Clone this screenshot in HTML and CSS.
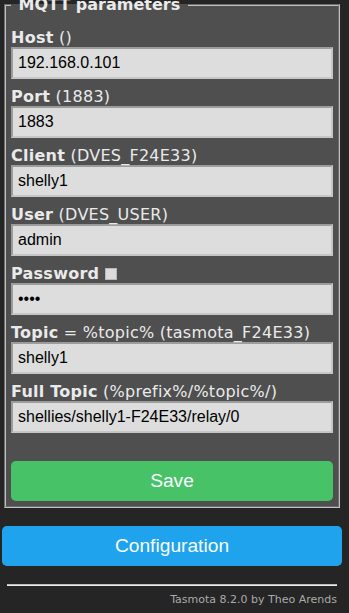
FILE: index.html
```html
<!DOCTYPE html>
<html lang="en">
<head>
  <meta charset="UTF-8">
  <title>Configure MQTT</title>
  <link rel="stylesheet" href="styles.css">
</head>
<body>
  <div class="main">
    <fieldset class="params">
      <legend>&nbsp;MQTT parameters&nbsp;</legend>

      <form id="mqttForm" class="mqtt-form">
        <p class="field">
          <label for="mh"><b>Host</b> ()</label>
          <input type="text" id="mh" value="192.168.0.101">
        </p>
        <p class="field">
          <label for="ml"><b>Port</b> (1883)</label>
          <input type="text" id="ml" value="1883">
        </p>
        <p class="field">
          <label for="mc"><b>Client</b> (DVES_F24E33)</label>
          <input type="text" id="mc" value="shelly1">
        </p>
        <p class="field">
          <label for="mu"><b>User</b> (DVES_USER)</label>
          <input type="text" id="mu" value="admin">
        </p>
        <p class="field">
          <label for="mp"><b>Password</b><input type="checkbox" id="show" class="show-pw"></label>
          <input type="password" id="mp" value="1234">
        </p>
        <p class="field">
          <label for="mt"><b>Topic</b> = %topic% (tasmota_F24E33)</label>
          <input type="text" id="mt" value="shelly1">
        </p>
        <p class="field">
          <label for="mf"><b>Full Topic</b> (%prefix%/%topic%/)</label>
          <input type="text" id="mf" value="shellies/shelly1-F24E33/relay/0">
        </p>

        <button type="submit" class="btn btn-save">Save</button>
      </form>
    </fieldset>

    <button type="button" class="btn btn-config">Configuration</button>

    <div class="footer">
      <hr>
      <span class="credit">Tasmota 8.2.0 by Theo Arends</span>
    </div>
  </div>
</body>
</html>
```

FILE: styles.css
```css
body {
  background: #252525;
  font-family: "DejaVu Sans", Verdana, sans-serif;
  font-size: 16px;
  margin: 0;
  overflow: hidden;
}

.main {
  width: 340px;
  margin: -4px 0 0 2px;
  color: #eaeaea;
}

.params {
  background: #4f4f4f;
  margin: 0 2px;
  padding: 6px 5px 5px;
  border: 2px groove #c0c0c0;
  min-width: 0;
}

.params legend {
  font-weight: bold;
  line-height: 18px;
  padding: 0 2px;
}

.field {
  margin: 8px 0;
}

.field label {
  display: block;
  line-height: 19px;
  letter-spacing: 0.25px;
}

.field input[type=text],
.field input[type=password] {
  display: block;
  width: 100%;
  height: 32px;
  box-sizing: border-box;
  padding: 5px;
  border: 2px solid;
  border-color: #9c9c9c #c6c6c6 #c6c6c6 #9c9c9c;
  background: #dddddd;
  color: #000;
  font-family: "Liberation Sans", Arial, sans-serif;
  font-size: 16px;
}

.show-pw {
  appearance: none;
  -webkit-appearance: none;
  width: 12px;
  height: 12px;
  margin: 0 0 0 6px;
  vertical-align: -1px;
  background: #dcdcdc;
  border: 1px solid #b8b8b8;
  box-sizing: border-box;
}

.btn {
  display: block;
  width: 100%;
  height: 40px;
  border: 0;
  border-radius: 0.3rem;
  background: #1fa3ec;
  color: #faffff;
  font-family: "Liberation Sans", Arial, sans-serif;
  font-size: 1.2rem;
  line-height: 40px;
  padding: 0;
  cursor: pointer;
}

.btn-save {
  background: #47c266;
  margin-top: 28px;
}

.btn-config {
  margin-top: 18px;
}

.footer {
  text-align: right;
  font-size: 11px;
  padding: 0 5px;
}

.footer hr {
  margin: 18px 0 0;
  height: 0;
  border: 0;
  border-top: 1px solid #bdbdbd;
  border-bottom: 1px solid #ececec;
}

.credit {
  display: block;
  margin-top: 7px;
  line-height: 13px;
  color: #aaa;
}
```
